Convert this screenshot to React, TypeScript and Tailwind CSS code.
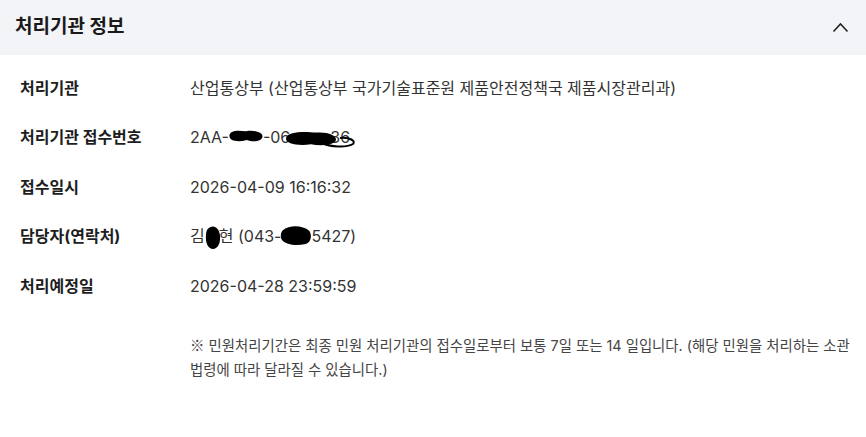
import React from "react";

const font = { fontFamily: 'Inter, "Noto Sans CJK KR", sans-serif' };

function Blob({ className, d }: { className: string; d: string }) {
  return (
    <svg className={`absolute pointer-events-none ${className}`} viewBox="0 0 100 40" preserveAspectRatio="none">
      <path d={d} fill="#000" />
    </svg>
  );
}

function Row({ label, children }: { label: string; children: React.ReactNode }) {
  return (
    <div className="flex items-center h-[49.5px]">
      <div className="w-[190px] pl-[20px] text-[16px] font-bold text-[#1e1e1e]">{label}</div>
      <div className="text-[16px] text-[#333]">{children}</div>
    </div>
  );
}

export default function App() {
  return (
    <div className="w-[866px] h-[437px] bg-white" style={font}>
      <div className="h-[55px] bg-[#f3f4f8] flex items-center justify-between pl-[15px] pr-[17px]">
        <div className="text-[19px] font-bold text-[#1a1a1a]">처리기관 정보</div>
        <svg width="17" height="11" viewBox="0 0 17 11" fill="none">
          <path d="M1.5 9.5 L8.5 2 L15.5 9.5" stroke="#222" strokeWidth="1.6" />
        </svg>
      </div>
      <div className="pt-[8px]">
        <Row label="처리기관">산업통상부 (산업통상부 국가기술표준원 제품안전정책국 제품시장관리과)</Row>
        <Row label="처리기관 접수번호">
          <span className="whitespace-nowrap">
            2AA-
            <span className="relative inline-block w-[34px] align-top">
              &nbsp;
              <Blob className="-left-[1px] top-[3px] w-[36px] h-[16px]" d="M4 18 C8 4 30 6 50 8 C70 4 96 10 96 20 C96 34 70 36 52 30 C30 36 2 34 4 18 Z" />
            </span>
            -06
            <span className="relative inline-block w-[40px] align-top">
              &nbsp;
              <Blob className="-left-[5px] top-[4px] w-[52px] h-[18px]" d="M2 20 C6 4 40 6 60 8 C82 6 99 14 98 24 C97 36 70 38 50 34 C28 38 0 34 2 20 Z" />
              <svg className="absolute left-[30px] top-[8px] w-[36px] h-[16px] pointer-events-none" viewBox="0 0 36 16" fill="none">
                <path d="M2 10 C10 14 26 15 33 11 C36 8 30 4 20 5" stroke="#000" strokeWidth="2" />
              </svg>
            </span>
            36
          </span>
        </Row>
        <Row label="접수일시">2026-04-09 16:16:32</Row>
        <Row label="담당자(연락처)">
          <span className="whitespace-nowrap">
            김
            <span className="relative inline-block w-[14px] align-top">
              &nbsp;
              <Blob className="left-[0px] top-[1px] w-[16px] h-[24px]" d="M20 6 C50 -2 90 4 94 18 C98 30 80 40 50 40 C20 40 2 30 6 18 C8 10 12 8 20 6 Z" />
            </span>
            현 (043-
            <span className="relative inline-block w-[30px] align-top">
              &nbsp;
              <Blob className="-left-[1px] top-[1px] w-[32px] h-[20px]" d="M10 10 C30 0 70 0 92 12 C100 20 98 34 80 38 C50 42 20 40 6 30 C0 24 2 14 10 10 Z" />
            </span>
            5427)
          </span>
        </Row>
        <Row label="처리예정일">2026-04-28 23:59:59</Row>
        <div className="pl-[190px] mt-[22px] text-[14.4px] leading-[24px] text-[#444]">
          <div className="whitespace-nowrap">
            <span style={{ fontFamily: '"Noto Sans CJK KR", sans-serif' }}>※</span> 민원처리기간은 최종 민원 처리기관의 접수일로부터 보통 7일 또는 14 일입니다. (해당 민원을 처리하는 소관
          </div>
          <div className="whitespace-nowrap">법령에 따라 달라질 수 있습니다.)</div>
        </div>
      </div>
    </div>
  );
}
